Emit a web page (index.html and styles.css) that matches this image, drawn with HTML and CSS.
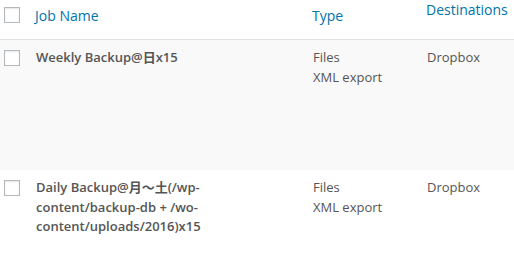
FILE: index.html
```html
<!DOCTYPE html>
<html lang="en">
<head>
    <meta charset="UTF-8">
    <title>Jobs</title>
    <link rel="stylesheet" href="styles.css">
</head>
<body>

<table class="jobs-table">
    <colgroup>
        <col class="col-check">
        <col class="col-name">
        <col class="col-type">
        <col class="col-dest">
    </colgroup>
    <thead>
        <tr>
            <th class="check-column"><input type="checkbox"></th>
            <th><a href="#">Job Name</a></th>
            <th><a href="#">Type</a></th>
            <th class="dest-head"><a href="#">Destinations</a></th>
        </tr>
    </thead>
    <tbody>
        <tr class="alternate tall">
            <td class="check-column"><input type="checkbox"></td>
            <td class="row-title">Weekly Backup@日x15</td>
            <td>Files<br>XML export</td>
            <td>Dropbox</td>
        </tr>
        <tr>
            <td class="check-column"><input type="checkbox"></td>
            <td class="row-title">Daily Backup@月〜土(/wp-content/backup-db + /wo-content/uploads/2016)x15</td>
            <td>Files<br>XML export</td>
            <td>Dropbox</td>
        </tr>
    </tbody>
</table>

</body>
</html>
```

FILE: styles.css
```css
/* Jobs list table */
body {
    margin: 0;
    background: #ffffff;
    font-family: 'Open Sans', 'Noto Sans CJK JP', sans-serif;
    color: #555;
}

.jobs-table {
    width: 514px;
    border-collapse: collapse;
    table-layout: fixed;
}

.col-check { width: 25px; }
.col-name { width: 277px; }
.col-type { width: 114px; }

.jobs-table th {
    height: 39px;
    padding: 0 10px;
    text-align: left;
    font-weight: normal;
    font-size: 14px;
    line-height: 21px;
    vertical-align: top;
    border-bottom: 1px solid #e1e1e1;
}

.jobs-table th a {
    display: block;
    padding-top: 5px;
    color: #0073aa;
    text-decoration: none;
}

.jobs-table th.dest-head a {
    padding-top: 0;
    margin-top: -1px;
}

.jobs-table td {
    padding: 8px 9px 0 11px;
    font-size: 13px;
    line-height: 19.5px;
    vertical-align: top;
    height: 52px;
}

.jobs-table tr.tall td {
    height: 122px;
}

.alternate td {
    background-color: #f9f9f9;
}

.row-title {
    font-weight: 600;
}

.check-column {
    padding: 0 0 0 4px !important;
}

/* Checkbox */
input[type="checkbox"] {
    -webkit-appearance: none;
    appearance: none;
    display: block;
    width: 16px;
    height: 16px;
    margin: 0;
    border: 1px solid #b4b9be;
    background: #fff;
    box-shadow: inset 0 1px 2px rgba(0, 0, 0, 0.1);
    box-sizing: border-box;
}

th.check-column input { margin-top: 7px; }
td.check-column input { margin-top: 10px; }
```
